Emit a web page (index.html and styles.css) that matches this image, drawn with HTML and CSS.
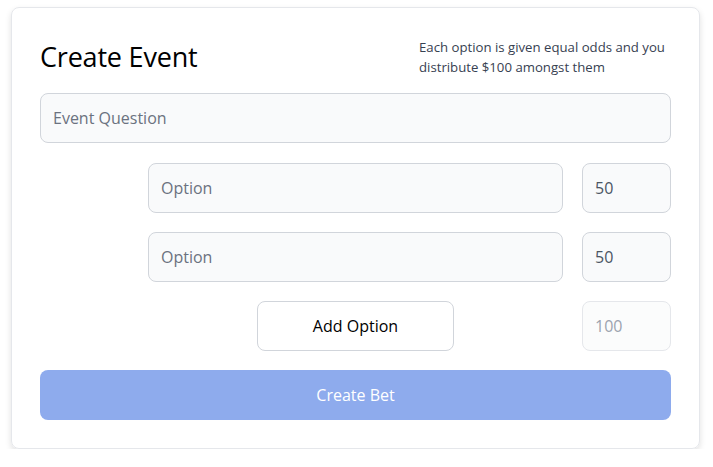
FILE: index.html
```html
<!DOCTYPE html>
<html>
<head>
<meta charset="utf-8">
<link rel="stylesheet" href="styles.css">
</head>
<body>
<div class="card">
  <div class="header">
    <h1 class="title">Create Event</h1>
    <p class="desc">Each option is given equal odds and you distribute $100 amongst them</p>
  </div>
  <input class="field question" type="text" placeholder="Event Question">
  <div class="row">
    <input class="field option" type="text" placeholder="Option">
    <input class="field num" type="text" value="50">
  </div>
  <div class="row">
    <input class="field option" type="text" placeholder="Option">
    <input class="field num" type="text" value="50">
  </div>
  <div class="row">
    <div class="add-wrap"><button class="add">Add Option</button></div>
    <input class="field num total" type="text" value="100" disabled>
  </div>
  <button class="submit" disabled>Create Bet</button>
</div>
</body>
</html>
```
FILE: styles.css
```css
* { box-sizing: border-box; }
html, body { margin: 0; padding: 0; background: #ffffff; }
body {
  font-family: "Open Sans", "Noto Sans", sans-serif;
  padding: 7px 13px 0 11px;
}
.card {
  width: 689px;
  border: 1px solid #e5e7eb;
  border-radius: 8px;
  box-shadow: 0 3px 6px rgba(0,0,0,0.12);
  padding: 28px 28px 28px 28px;
  display: flex;
  flex-direction: column;
  gap: 19px;
}
.header {
  display: flex;
  justify-content: space-between;
  align-items: flex-start;
  margin-bottom: -3px;
}
.title {
  margin: 2px 0 0 0;
  font-size: 27px;
  font-weight: 400;
  line-height: 38px;
  color: #000;
  letter-spacing: -0.2px;
}
.desc {
  margin: 1px 2px 0 0;
  width: 250px;
  font-size: 13.2px;
  line-height: 20px;
  color: #374151;
}
.field {
  height: 50px;
  border: 1px solid #d1d5db;
  border-radius: 8px;
  background: #f9fafb;
  font-family: inherit;
  font-size: 16px;
  color: #4b5563;
  padding: 0 12px;
  outline: none;
  width: 100%;
}
.question { margin-bottom: 1px; }
.field::placeholder { color: #6b7280; }
.row {
  display: flex;
  gap: 19px;
  padding-left: 108px;
}
.option { flex: 1; }
.num { width: 89px; flex: none; }
.total {
  background: #fbfcfc;
  border-color: #e5e7eb;
  color: #9ca3af;
}
.add-wrap {
  flex: 1;
  display: flex;
  justify-content: center;
}
.add {
  width: 197px;
  height: 50px;
  background: #fff;
  border: 1px solid #d1d5db;
  border-radius: 8px;
  font-family: inherit;
  font-size: 16px;
  color: #000;
}
.submit {
  height: 50px;
  width: 100%;
  border: none;
  border-radius: 8px;
  background: #8eabed;
  color: #fff;
  font-family: inherit;
  font-size: 16px;
}
```
